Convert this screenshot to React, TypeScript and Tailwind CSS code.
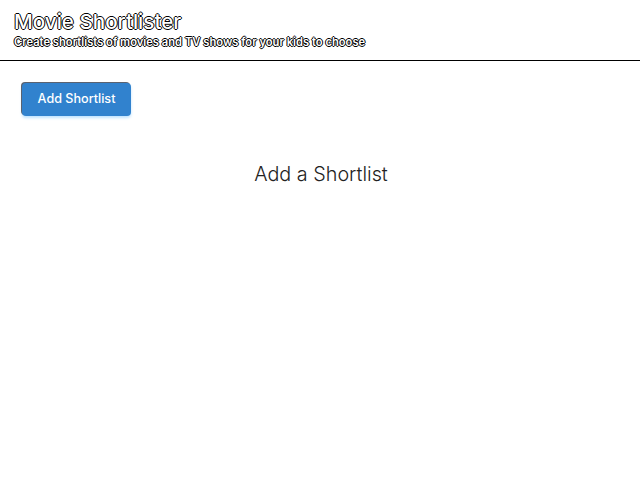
import React from "react";

export default function App() {
  return (
    <div className="min-h-[498px] w-full bg-white" style={{ fontFamily: "Inter, 'Noto Sans', sans-serif" }}>
      <header className="border-b border-black px-[14px] pt-[10px] pb-[11px]">
        <h1 className="text-[20.6px] leading-[24px] font-medium text-white [text-shadow:-1px_0_0_#000,1px_0_0_#000,0_-1px_0_#000,0_1px_0_#000]">
          Movie Shortlister
        </h1>
        <p className="text-[11.2px] leading-[14px] font-semibold text-white mt-[1px] [text-shadow:-1px_0_0_#000,1px_0_0_#000,0_-1px_0_#000,0_1px_0_#000]">
          Create shortlists of movies and TV shows for your kids to choose
        </p>
      </header>
      <div className="px-[22px] pt-[22px]">
        <button className="h-[33px] w-[109px] rounded-[4px] bg-[#3182ce] text-white text-[12.6px] font-medium shadow-[-1px_-1px_0_#5a6270,0_2px_3px_#bfe3ff]">
          Add Shortlist
        </button>
      </div>
      <h2 className="mt-[46px] text-center text-[19.8px] leading-[24px] font-light text-[#222] pl-[2px]">
        Add a Shortlist
      </h2>
    </div>
  );
}
